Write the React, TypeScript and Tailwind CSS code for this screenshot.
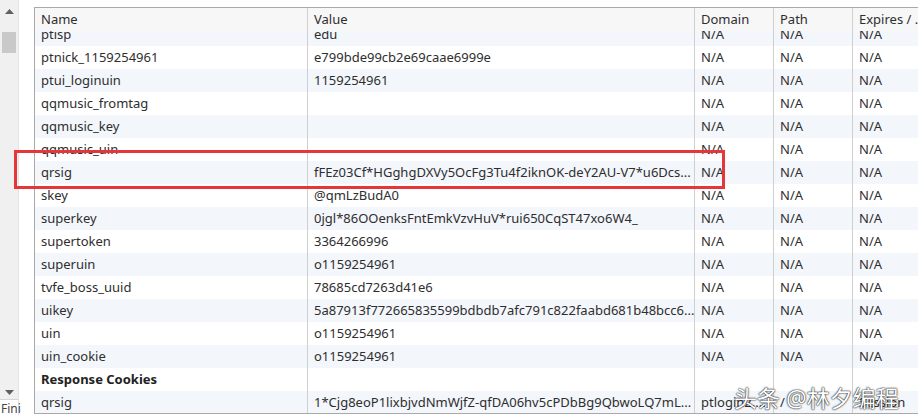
import React from 'react'

type Row = {
  name: string
  value?: string
  domain?: string
  path?: string
  expires?: string
  section?: boolean
}

const rows: Row[] = [
  { name: 'ptisp', value: 'edu' },
  { name: 'ptnick_1159254961', value: 'e799bde99cb2e69caae6999e' },
  { name: 'ptui_loginuin', value: '1159254961' },
  { name: 'qqmusic_fromtag', value: '' },
  { name: 'qqmusic_key', value: '' },
  { name: 'qqmusic_uin', value: '' },
  { name: 'qrsig', value: 'fFEz03Cf*HGghgDXVy5OcFg3Tu4f2iknOK-deY2AU-V7*u6Dcs...' },
  { name: 'skey', value: '@qmLzBudA0' },
  { name: 'superkey', value: '0jgl*86OOenksFntEmkVzvHuV*rui650CqST47xo6W4_' },
  { name: 'supertoken', value: '3364266996' },
  { name: 'superuin', value: 'o1159254961' },
  { name: 'tvfe_boss_uuid', value: '78685cd7263d41e6' },
  { name: 'uikey', value: '5a87913f772665835599bdbdb7afc791c822faabd681b48bcc6...' },
  { name: 'uin', value: 'o1159254961' },
  { name: 'uin_cookie', value: 'o1159254961' },
  { name: 'Response Cookies', section: true },
  {
    name: 'qrsig',
    value: '1*Cjg8eoP1lixbjvdNmWjfZ-qfDA06hv5cPDbBg9QbwoLQ7mL...',
    domain: 'ptlogin2....',
    path: '/',
    expires: 'Session',
  },
]

const cols = 'grid grid-cols-[273px_387px_79px_79px_1fr]'
const cell = 'h-[23px] px-[6px] flex items-center whitespace-nowrap overflow-hidden border-r border-[#cfcfcf]'

function ScrollBar() {
  return (
    <div className="w-[19px] h-full flex flex-col bg-[#f0f0f0] border-r border-[#e3e3e3]">
      <div className="h-[22px] flex items-center justify-center">
        <svg width="9" height="5" viewBox="0 0 9 5">
          <path d="M0 5 L4.5 0 L9 5 Z" fill="#606060" />
        </svg>
      </div>
      <div className="mx-[2px] mt-[10px] h-[21px] bg-[#c9c9c9]" />
      <div className="flex-1" />
      <div className="h-[14px] flex items-center justify-center">
        <svg width="9" height="5" viewBox="0 0 9 5">
          <path d="M0 0 L4.5 5 L9 0 Z" fill="#606060" />
        </svg>
      </div>
      <div className="h-[16px] border-t border-[#d6d6d6] bg-white pl-[1px] text-[12px] leading-[18px] text-[#444]">
        Fini
      </div>
    </div>
  )
}

export default function App() {
  return (
    <div
      className="relative w-[918px] h-[415px] flex overflow-hidden bg-white text-[13px] text-[#2e2e2e]"
      style={{ fontFamily: '"Noto Sans", "Open Sans", "Noto Sans CJK SC", sans-serif' }}
    >
      <ScrollBar />
      <div className="flex-1 pl-[15px] pt-[7px]">
        <div className="h-[407px] flex flex-col border-l border-t border-b border-[#a9a9a9] overflow-hidden">
          {/* Header */}
          <div className={`${cols} bg-[#f7f7f7] relative z-10`}>
            <div className={`${cell} border-[#b5b5b5]`}>Name</div>
            <div className={`${cell} border-[#b5b5b5]`}>Value</div>
            <div className={`${cell} border-[#b5b5b5]`}>Domain</div>
            <div className={`${cell} border-[#b5b5b5]`}>Path</div>
            <div className={`${cell} border-r-0`}>Expires / ...</div>
          </div>

          {/* Body, scrolled a few pixels */}
          <div className="flex-1 overflow-hidden">
            <div className="mt-[-8px]">
              {rows.map((r, i) => (
                <div key={i} className={`${cols} ${i % 2 === 0 ? 'bg-[#f3f6fb]' : 'bg-white'}`}>
                  <div className={`${cell} ${r.section ? 'font-bold text-[#222]' : ''}`}>{r.name}</div>
                  <div className={cell}>{r.value}</div>
                  <div className={cell}>{r.section ? '' : r.domain ?? 'N/A'}</div>
                  <div className={cell}>{r.section ? '' : r.path ?? 'N/A'}</div>
                  <div className={`${cell} border-r-0`}>{r.section ? '' : r.expires ?? 'N/A'}</div>
                </div>
              ))}
            </div>
          </div>
        </div>
      </div>

      {/* Highlight box */}
      <div className="absolute left-[14px] top-[150px] w-[711px] h-[39px] border-[3px] border-[#e5373a]" />

      {/* Watermark */}
      <div className="absolute left-[734px] top-[381px] text-[23px] leading-[34px] text-white [text-shadow:0_0_2px_rgba(0,0,0,0.9),0_0_1px_rgba(0,0,0,1)]">
        头条 @林夕编程
      </div>
    </div>
  )
}
